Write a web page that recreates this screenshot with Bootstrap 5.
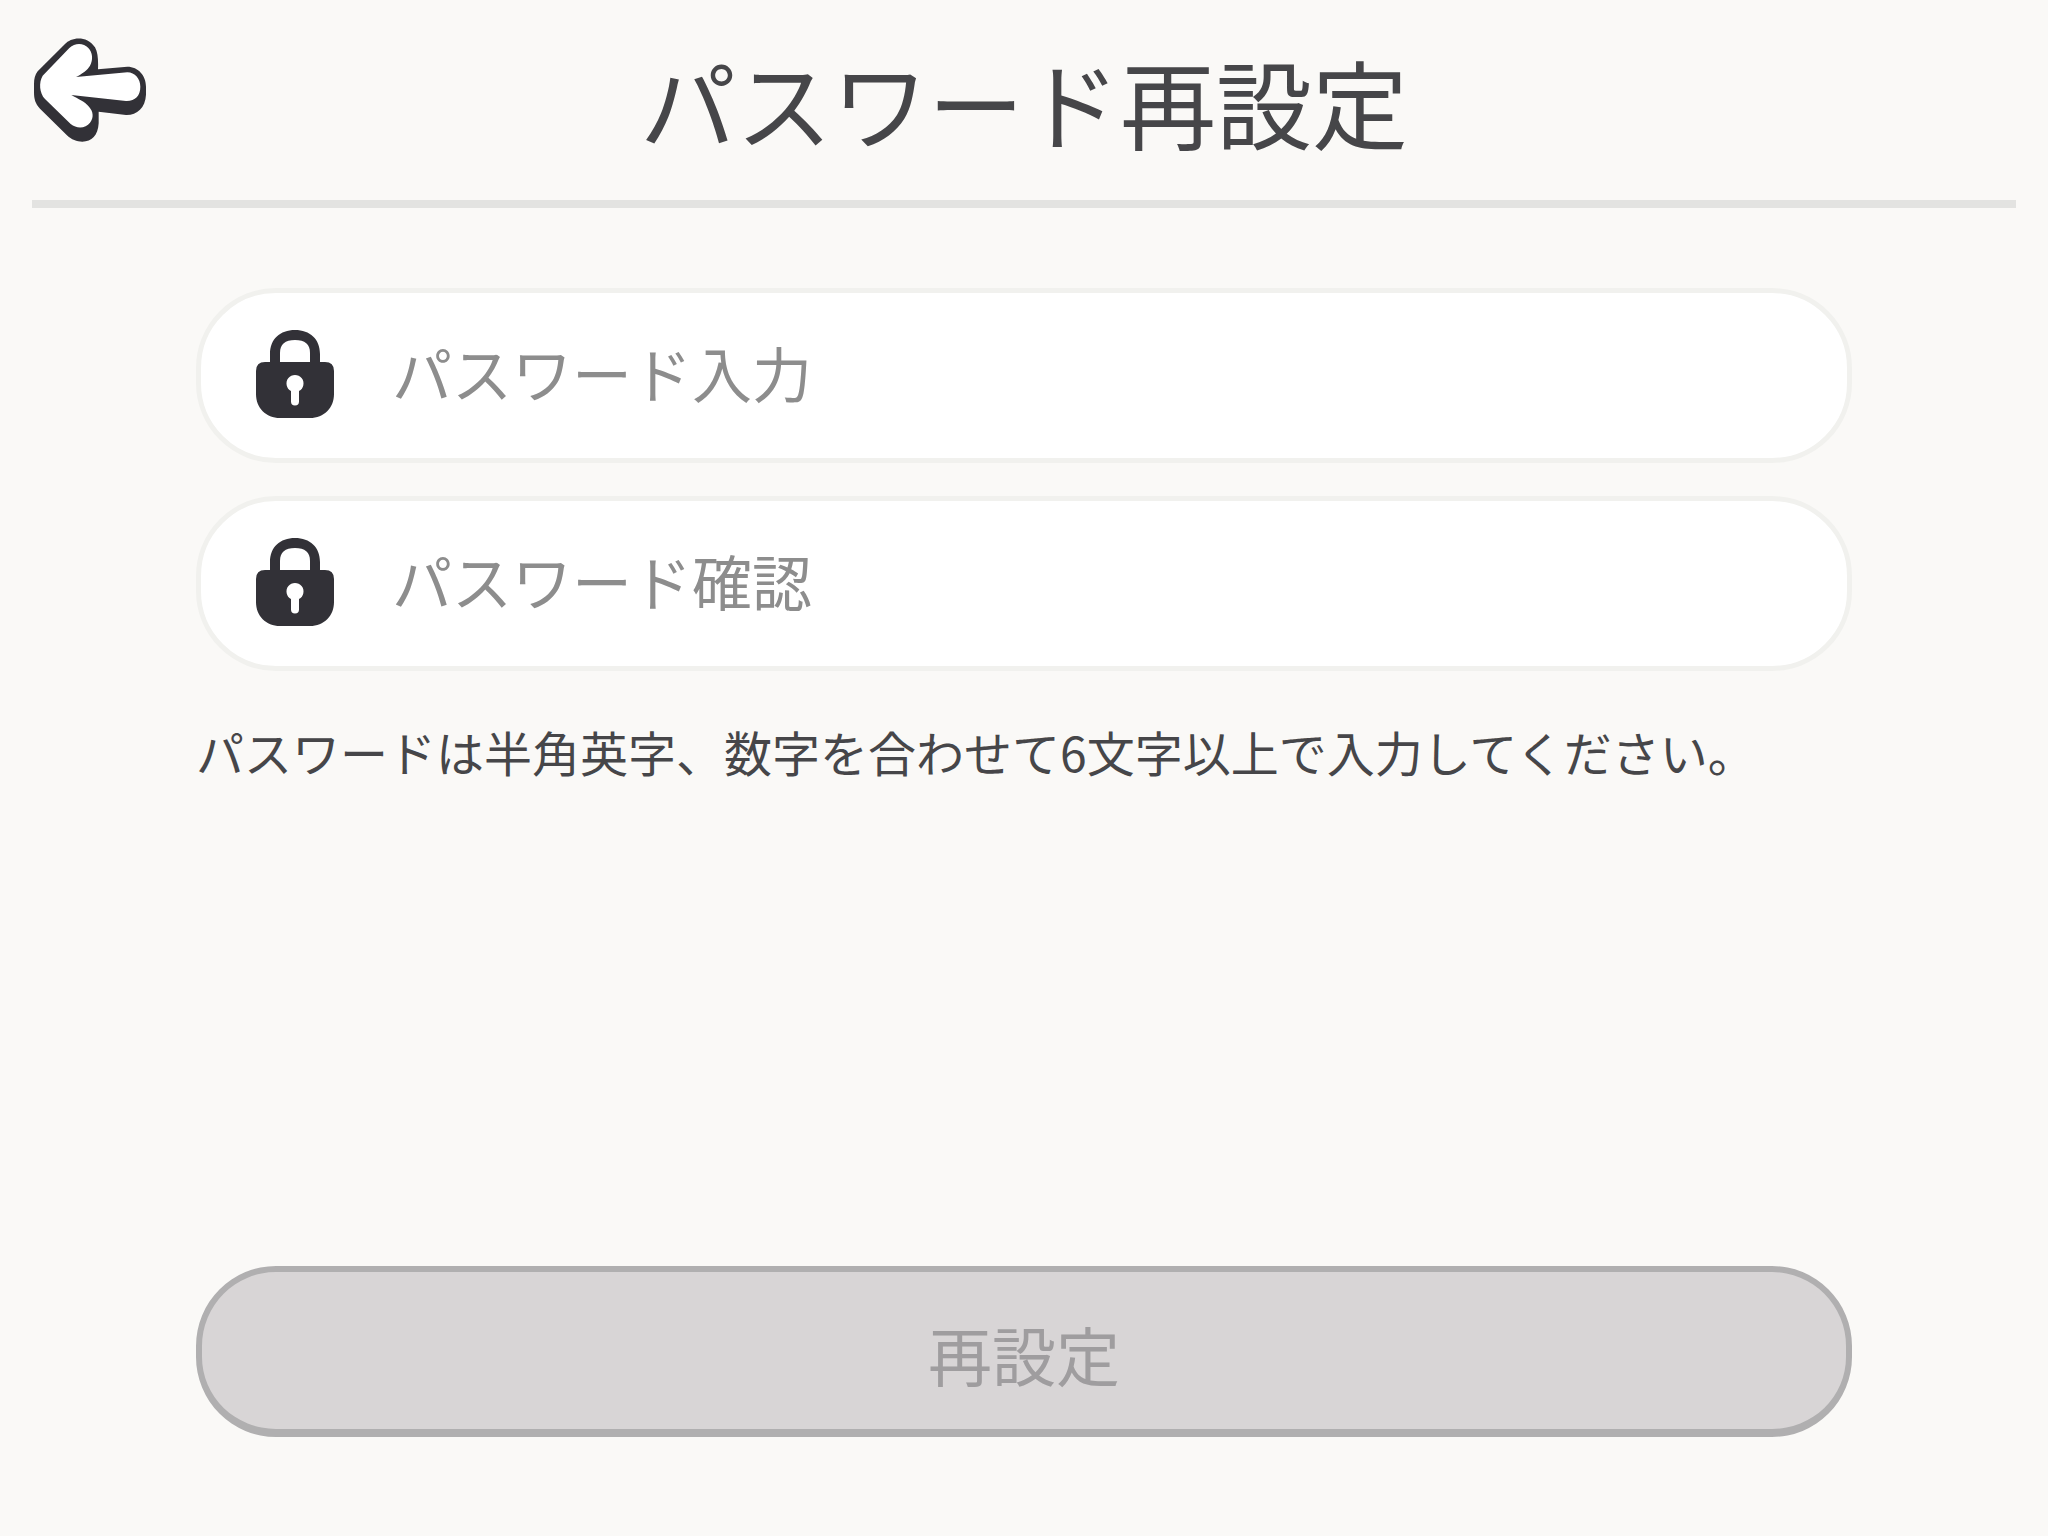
<!DOCTYPE html>
<html lang="ja">
<head>
<meta charset="utf-8">
<meta name="viewport" content="width=device-width, initial-scale=1">
<title>パスワード再設定</title>
<link href="https://cdn.jsdelivr.net/npm/bootstrap@5.3.0/dist/css/bootstrap.min.css" rel="stylesheet">
<style>
  body { background: #faf9f7; color: #464649; font-family: "Noto Sans CJK JP", "Noto Sans", sans-serif; }
  .top-bar { margin: 0 32px; height: 208px; border-bottom: 8px solid #e3e3e1; display: grid; grid-template-columns: 114px 1fr 114px; }
  .back-link { padding: 38px 0 0 2px; line-height: 0; }
  .page-title { font-size: 96px; line-height: 202px; }
  .reset-form { padding: 80px 196px 99px; }
  .pw-field { height: 175px; padding: 0 54px 4px 55px; gap: 58px; background: #fff; border: 5px solid #f1f1ee; border-radius: 80px; }
  .pw-field .form-control { font-size: 60px; line-height: 90px; color: #464649; padding: 0 0 4px; }
  .pw-field .form-control::placeholder { color: #8d8d8d; opacity: 1; }
  .fields { gap: 33px; }
  .hint { font-size: 48px; line-height: 72px; margin-top: 44px; }
  .reset-btn { height: 171px; font-size: 64px; line-height: 96px; padding: 4px 0 0; border: 6px solid #b0afb0; border-bottom-width: 8px; border-radius: 80px; }
  .reset-btn:disabled { background: #d8d5d6; border-color: #b0afb0; color: #9f9d9f; opacity: 1; }
</style>
</head>
<body class="min-vh-100 d-flex flex-column">
<header class="top-bar">
  <a class="back-link" href="#" aria-label="戻る">
    <svg width="112" height="104" viewBox="42 52 336 312" aria-hidden="true">
      <path fill="#323137" d="M53 152L135 70C152 50 200 42 225 80C234 95 235 120 234 146L322 138C355 138 378 165 378 198L378 222C376 262 350 284 318 283L236 273L236 308C234 345 215 363 187 363C170 363 155 357 140 343L60 264C46 250 42 235 42 215L42 190C42 175 45 162 53 152Z"/>
      <path fill="#fff" d="M68 165L148 82C165 66 190 66 205 82C218 95 220 118 210 135C203 148 185 160 168 169L322 155C345 155 361 175 361 198C361 225 345 242 318 241L154 223C175 235 195 243 207 258C220 273 222 290 210 306C197 324 170 325 152 310L75 235C58 217 56 185 68 165Z"/>
    </svg>
  </a>
  <h1 class="page-title fw-normal text-center mb-0">パスワード再設定</h1>
</header>
<main class="flex-grow-1 d-flex flex-column">
  <form class="reset-form flex-grow-1 d-flex flex-column">
    <div class="fields d-flex flex-column">
      <div class="pw-field d-flex align-items-center">
        <label for="pw" class="d-flex flex-shrink-0" aria-label="パスワード入力">
          <svg width="78" height="88" viewBox="0 0 78 88" aria-hidden="true">
            <path fill="#323137" fill-rule="evenodd" d="M14 32V24C14 9 24 0 39 0S64 9 64 24V32H69Q78 32 78 41V64C78 78 68 88 54 88H24C10 88 0 78 0 64V41Q0 32 9 32ZM24 32H54V23C54 14 49 10 39 10S24 14 24 23ZM35 61V71.500A4 4 0 0 0 43 71.500V61A8.500 8.500 0 1 0 35 61Z"/>
          </svg>
        </label>
        <input type="password" id="pw" class="form-control border-0 bg-transparent shadow-none" placeholder="パスワード入力">
      </div>
      <div class="pw-field d-flex align-items-center">
        <label for="pw2" class="d-flex flex-shrink-0" aria-label="パスワード確認">
          <svg width="78" height="88" viewBox="0 0 78 88" aria-hidden="true">
            <path fill="#323137" fill-rule="evenodd" d="M14 32V24C14 9 24 0 39 0S64 9 64 24V32H69Q78 32 78 41V64C78 78 68 88 54 88H24C10 88 0 78 0 64V41Q0 32 9 32ZM24 32H54V23C54 14 49 10 39 10S24 14 24 23ZM35 61V71.500A4 4 0 0 0 43 71.500V61A8.500 8.500 0 1 0 35 61Z"/>
          </svg>
        </label>
        <input type="password" id="pw2" class="form-control border-0 bg-transparent shadow-none" placeholder="パスワード確認">
      </div>
    </div>
    <p class="hint mb-0">パスワードは半角英字、数字を合わせて6文字以上で入力してください。</p>
    <button type="submit" class="reset-btn btn w-100 mt-auto" disabled>再設定</button>
  </form>
</main>
<script src="https://cdn.jsdelivr.net/npm/bootstrap@5.3.0/dist/js/bootstrap.bundle.min.js"></script>
</body>
</html>
